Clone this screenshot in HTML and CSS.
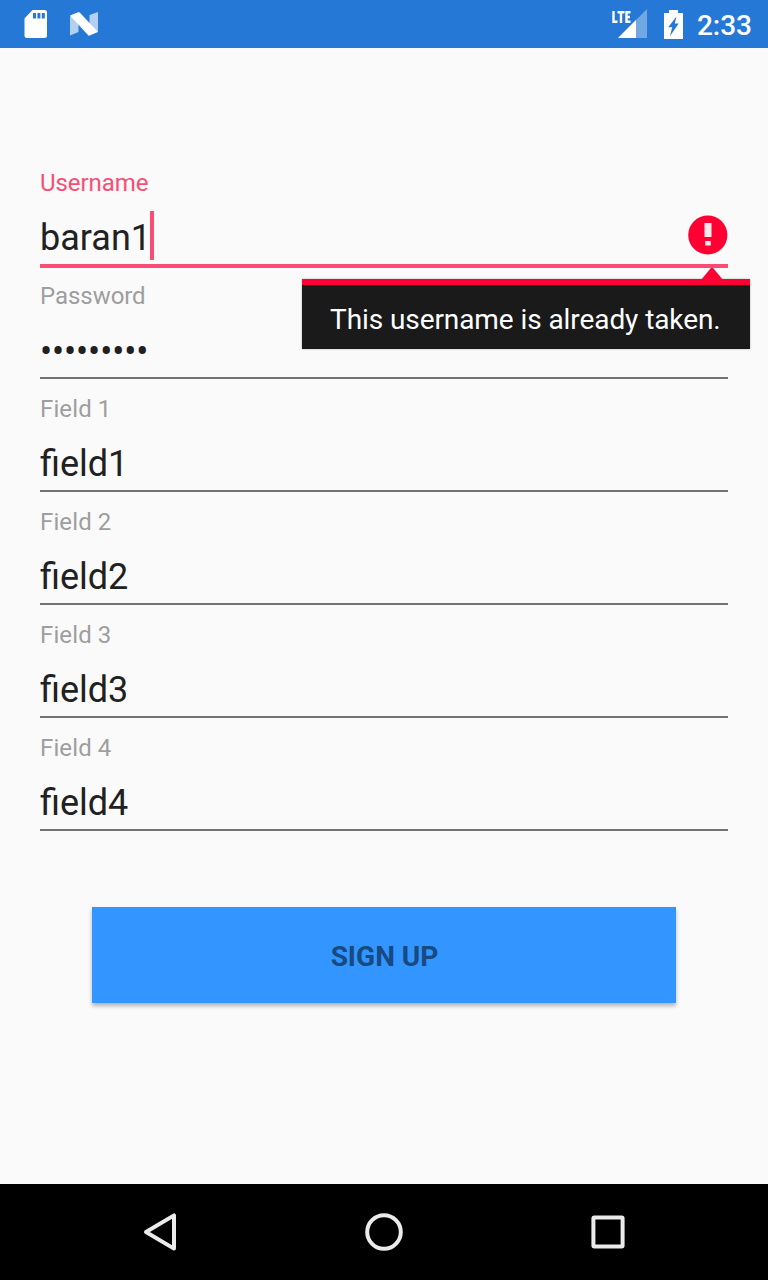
FILE: index.html
```html
<!DOCTYPE html>
<html lang="en">
<head>
<meta charset="utf-8">
<title>Sign up</title>
<link rel="stylesheet" href="styles.css">
</head>
<body>
<div class="screen">
  <header class="status-bar">
    <svg class="icon-sd" width="24" height="28" viewBox="0 0 24 28"><path fill="#fff" fill-rule="evenodd" d="M8.500 0H20.500Q23 0 23 2.500V25.500Q23 28 20.500 28H3Q.5 28 .5 25.500V8.500ZM9 3V8.500H12V3ZM13.400 3V8.500H16.400V3ZM17.800 3V8.500H20.800V3Z"/></svg>
    <svg class="icon-n" width="28" height="24" viewBox="0 0 28 24"><path fill="#fff" fill-opacity=".65" d="M0 4 8.500 9V20L0 23.500ZM28 0V20L19.500 15V3Z"/><path fill="#fff" d="M0 3.600 8.200.3Q9 0 9.700.6L28 20 19.500 23.600Q18.800 23.900 18.200 23.200Z"/></svg>
    <div class="status-right">
      <div class="signal">
        <svg width="30" height="30" viewBox="0 0 30 30"><path fill="#fff" fill-opacity=".35" d="M29 0V29H0Z"/><path fill="#fff" d="M18 11V29H0Z"/></svg>
        <svg class="lte" width="20" height="14" viewBox="0 0 20 14"><path fill="none" stroke="#fff" stroke-width="2.400" d="M1.500 1V11.800H5.500M5.500 2.200H12.500M9 2V13M18.500 2.200H14.500V11.800H18.500M14.500 7H18"/></svg>
      </div>
      <svg class="icon-battery" width="19" height="29" viewBox="0 0 19 29"><path fill="#fff" fill-rule="evenodd" d="M5 0H14V3H19V29H0V3H5ZM12.500 6.500 4.200 17.300H8.200L6 26 14.800 13.500H10.800Z"/></svg>
      <time class="clock">2:33</time>
    </div>
  </header>

  <main class="form">
    <div class="field field-active">
      <label class="label">Username</label>
      <div class="value">baran1<span class="caret"></span></div>
      <div class="line"></div>
      <svg class="error-icon" width="40" height="40" viewBox="0 0 40 40"><circle cx="19.800" cy="20" r="19.600" fill="#ff0033"/><path fill="#fde8ec" d="M16.500 8H23.500V22H16.500ZM17.200 26H22.800V30.500H17.200Z"/></svg>
      <div class="tooltip" role="alert">This username is already taken.<svg class="arrow" width="22" height="13" viewBox="0 0 22 13"><path fill="#ff0033" d="M0 13 9.500 1.500Q11 0 12.500 1.500L22 13Z"/></svg></div>
    </div>
    <div class="field"><label class="label">Password</label><div class="value value-masked">•••••••••</div><div class="line"></div></div>
    <div class="field field-numbered"><label class="label">Field 1</label><div class="value">field1</div><div class="line"></div></div>
    <div class="field field-numbered"><label class="label">Field 2</label><div class="value">field2</div><div class="line"></div></div>
    <div class="field field-numbered"><label class="label">Field 3</label><div class="value">field3</div><div class="line"></div></div>
    <div class="field field-numbered"><label class="label">Field 4</label><div class="value">field4</div><div class="line"></div></div>
    <button class="submit">SIGN UP</button>
  </main>

  <nav class="nav-bar">
    <svg width="40" height="40" viewBox="0 0 40 40"><path d="M6 20 34 3.400V36.600Z"/></svg>
    <svg width="40" height="40" viewBox="0 0 40 40"><circle cx="20" cy="20" r="16.800"/></svg>
    <svg width="40" height="40" viewBox="0 0 40 40"><rect x="5.400" y="5.400" width="29.200" height="29.200" rx="1"/></svg>
  </nav>
</div>
</body>
</html>
```
FILE: styles.css
```css
body {
  margin: 0;
  font-family: Roboto, sans-serif;
}

.screen {
  display: flex;
  flex-direction: column;
  width: 768px;
  height: 1280px;
  background: #fafafa;
  color: #212121;
}

.screen svg {
  display: block;
}

.status-bar {
  display: flex;
  align-items: center;
  box-sizing: border-box;
  height: 48px;
  padding: 0 16px 0 24px;
  background: #2578d5;
}

.icon-n {
  margin-left: 22px;
}

.status-right {
  display: flex;
  align-items: center;
  margin-left: auto;
}

.signal {
  position: relative;
}

.lte {
  position: absolute;
  left: -6px;
  top: 1px;
}

.icon-battery {
  margin-left: 16px;
}

.clock {
  margin-left: 14px;
  padding-top: 3px;
  color: #fff;
  font-size: 28px;
  font-weight: 500;
  line-height: 32px;
}

.form {
  display: flex;
  flex: 1;
  flex-direction: column;
  padding: 121px 40px 0;
}

.field {
  position: relative;
  display: flex;
  flex-direction: column;
  height: 113px;
}

.label {
  color: #9e9e9e;
  font-size: 24px;
  letter-spacing: -0.05px;
  line-height: 28px;
}

.field-numbered .label {
  letter-spacing: 0.12px;
}

.value {
  display: flex;
  align-items: center;
  height: 42px;
  margin: 20px 0 5px;
  font-size: 36px;
  line-height: 42px;
}

.value-masked {
  box-sizing: border-box;
  padding-top: 1px;
  letter-spacing: -0.12px;
}

.line {
  height: 2px;
  background: #737373;
}

.field-active .label {
  color: #fa4d76;
}

.field-active .line {
  height: 4px;
  background: #fa4d76;
}

.caret {
  width: 4px;
  height: 49px;
  margin: -6px 0 -3px -1px;
  transform: translateY(-1px);
  background: #fa4d76;
}

.error-icon {
  position: absolute;
  top: 46px;
  right: 0;
}

.tooltip {
  position: absolute;
  z-index: 1;
  top: 110px;
  right: -22px;
  box-sizing: border-box;
  width: 448px;
  height: 70px;
  padding: 19px 28px 0;
  border-top: 6px solid #ff0033;
  background: #1a1a1a;
  box-shadow: 0 0 2px rgba(0, 0, 0, 0.3);
  color: #fff;
  font-size: 28px;
  letter-spacing: -0.08px;
  line-height: 32px;
  white-space: nowrap;
}

.arrow {
  position: absolute;
  top: -18px;
  right: 27px;
}

.submit {
  width: 584px;
  height: 96px;
  margin: 60px auto 0;
  padding: 4px 0 0 1px;
  border: 0;
  background: #3395ff;
  box-shadow: 0 3px 4px rgba(0, 0, 0, 0.28);
  color: #174a80;
  font: 700 28px/32px Roboto, sans-serif;
}

.nav-bar {
  display: flex;
  align-items: center;
  justify-content: space-between;
  box-sizing: border-box;
  height: 96px;
  padding: 0 140px;
  background: #000;
  fill: none;
  stroke: #ebebeb;
  stroke-width: 4;
  stroke-linejoin: round;
}
```
